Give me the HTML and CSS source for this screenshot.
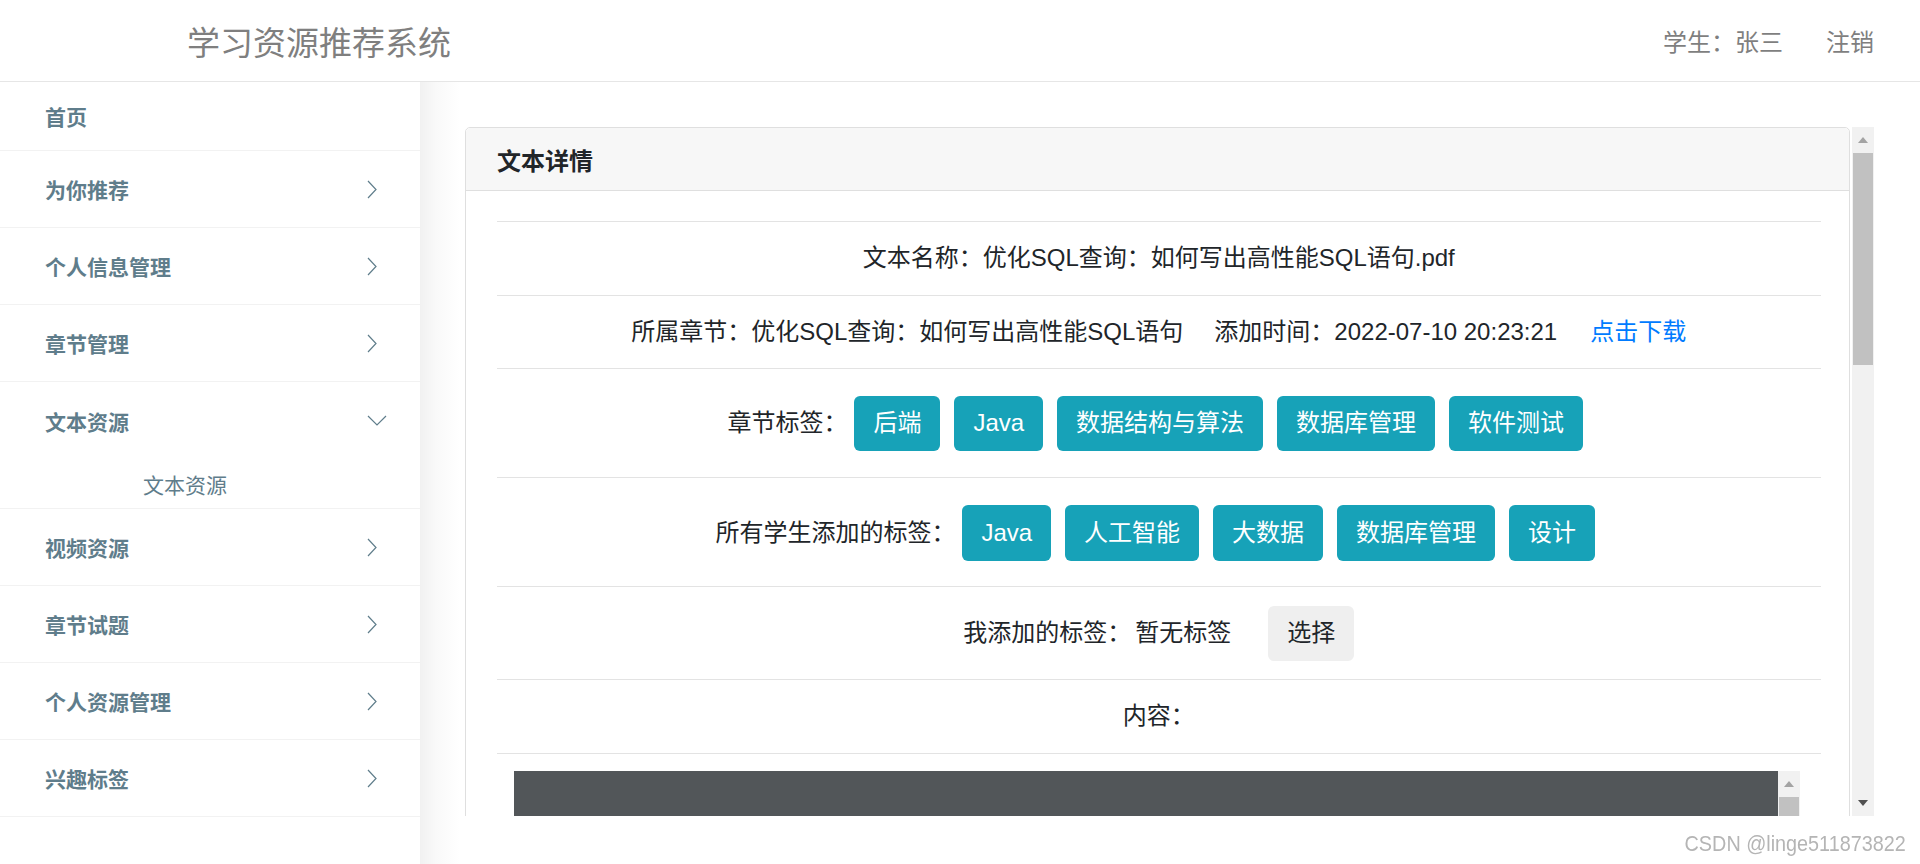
FILE: index.html
```html
<!DOCTYPE html>
<html lang="zh-CN">
<head>
<meta charset="utf-8">
<title>学习资源推荐系统</title>
<link rel="stylesheet" href="styles.css">
</head>
<body>
<header class="topbar">
  <div class="brand">学习资源推荐系统</div>
  <div class="user">
    <span class="user-name">学生：张三</span>
    <a class="logout">注销</a>
  </div>
</header>
<div class="layout">
  <nav class="sidebar">
    <div class="nav-item nav-home"><span>首页</span></div>
    <div class="nav-item"><span>为你推荐</span><span class="icon"><svg class="chev" viewBox="0 0 10 19"><polyline points="1,1 9,9.5 1,18"/></svg></span></div>
    <div class="nav-item"><span>个人信息管理</span><span class="icon"><svg class="chev" viewBox="0 0 10 19"><polyline points="1,1 9,9.5 1,18"/></svg></span></div>
    <div class="nav-item"><span>章节管理</span><span class="icon"><svg class="chev" viewBox="0 0 10 19"><polyline points="1,1 9,9.5 1,18"/></svg></span></div>
    <div class="nav-item nav-open"><span>文本资源</span><span class="icon"><svg class="chev-down" viewBox="0 0 20 11"><polyline points="1,1 10,10 19,1"/></svg></span></div>
    <div class="nav-sub">文本资源</div>
    <div class="nav-item"><span>视频资源</span><span class="icon"><svg class="chev" viewBox="0 0 10 19"><polyline points="1,1 9,9.5 1,18"/></svg></span></div>
    <div class="nav-item"><span>章节试题</span><span class="icon"><svg class="chev" viewBox="0 0 10 19"><polyline points="1,1 9,9.5 1,18"/></svg></span></div>
    <div class="nav-item"><span>个人资源管理</span><span class="icon"><svg class="chev" viewBox="0 0 10 19"><polyline points="1,1 9,9.5 1,18"/></svg></span></div>
    <div class="nav-item"><span>兴趣标签</span><span class="icon"><svg class="chev" viewBox="0 0 10 19"><polyline points="1,1 9,9.5 1,18"/></svg></span></div>
  </nav>
  <main class="main">
    <div class="scroller">
      <div class="viewport">
        <div class="card">
          <div class="card-header">文本详情</div>
          <div class="card-body">
            <div class="row row-text">文本名称：优化SQL查询：如何写出高性能SQL语句.pdf</div>
            <div class="row row-text">
              <span>所属章节：优化SQL查询：如何写出高性能SQL语句</span>
              <span class="meta-time">添加时间：2022-07-10 20:23:21</span>
              <a class="download">点击下载</a>
            </div>
            <div class="row row-tags">
              <span>章节标签：</span>
              <span class="tag">后端</span>
              <span class="tag">Java</span>
              <span class="tag">数据结构与算法</span>
              <span class="tag">数据库管理</span>
              <span class="tag">软件测试</span>
            </div>
            <div class="row row-tags row-tags2">
              <span>所有学生添加的标签：</span>
              <span class="tag">Java</span>
              <span class="tag">人工智能</span>
              <span class="tag">大数据</span>
              <span class="tag">数据库管理</span>
              <span class="tag">设计</span>
            </div>
            <div class="row row-mine">
              <span>我添加的标签：</span>
              <span class="empty">暂无标签</span>
              <span class="btn-select">选择</span>
            </div>
            <div class="row row-text row-last">内容：</div>
            <div class="pdf">
              <div class="pdf-page"></div>
              <div class="pdf-scroll">
                <div class="sb-btn"><svg class="arrow" viewBox="0 0 10 6"><polygon points="0,6 5,0 10,6" fill="#a3a3a3"/></svg></div>
                <div class="sb-thumb"></div>
              </div>
            </div>
          </div>
        </div>
      </div>
      <div class="vscroll">
        <div class="sb-btn"><svg class="arrow" viewBox="0 0 10 6"><polygon points="0,6 5,0 10,6" fill="#a3a3a3"/></svg></div>
        <div class="sb-thumb main-thumb"></div>
        <div class="sb-track"></div>
        <div class="sb-btn"><svg class="arrow" viewBox="0 0 10 6"><polygon points="0,0 10,0 5,6" fill="#505050"/></svg></div>
      </div>
    </div>
  </main>
</div>
<div class="watermark">CSDN @linge511873822</div>
</body>
</html>
```

FILE: styles.css
```css
* { box-sizing: border-box; }

html, body {
  margin: 0;
  padding: 0;
}

body {
  width: 1920px;
  height: 864px;
  overflow: hidden;
  display: flex;
  flex-direction: column;
  font-family: "Liberation Sans", "Noto Sans CJK SC", sans-serif;
  color: #212529;
  background: #fff;
}

/* ---------- top bar ---------- */
.topbar {
  flex: none;
  height: 82px;
  border-bottom: 1px solid #e6e6e6;
  display: flex;
  align-items: center;
  justify-content: space-between;
  padding: 0 46px 0 187px;
  color: #7f7f7f;
}

.brand {
  font-size: 33px;
}

.user {
  display: flex;
  gap: 43px;
  font-size: 24px;
}

.logout { cursor: pointer; }

/* ---------- layout ---------- */
.layout {
  flex: 1;
  min-height: 0;
  display: flex;
}

.sidebar {
  flex: none;
  width: 420px;
  background: #fff;
}

.nav-item {
  height: 77px;
  border-bottom: 1px solid #f2f2f2;
  display: flex;
  align-items: center;
  padding: 0 33px 0 45px;
  font-size: 21px;
  font-weight: 700;
  color: #5f7d8b;
}

.nav-home { height: 69px; }

.nav-open { border-bottom: none; }

.icon {
  margin-left: auto;
  width: 20px;
  height: 20px;
  display: flex;
  align-items: center;
}

.chev {
  width: 10px;
  height: 19px;
  fill: none;
  stroke: #5f7d8b;
  stroke-width: 1.2;
}

.chev-down {
  width: 20px;
  height: 11px;
  fill: none;
  stroke: #5f7d8b;
  stroke-width: 1.2;
}

.nav-sub {
  height: 50px;
  border-bottom: 1px solid #f2f2f2;
  display: flex;
  align-items: center;
  padding-left: 143px;
  font-size: 21px;
  color: #5f7d8b;
}

/* ---------- main ---------- */
.main {
  flex: 1;
  min-width: 0;
  display: flex;
  padding: 45px 46.5px 48.5px 45px;
  background: linear-gradient(to right, #f1f1f1 0, #f9f9f9 16px, #fff 40px);
}

.scroller {
  flex: 1;
  min-width: 0;
  display: flex;
}

.viewport {
  flex: 1;
  min-width: 0;
  overflow: hidden;
  padding-right: 2px;
}

.vscroll {
  flex: none;
  width: 22px;
  background: #f1f1f1;
  display: flex;
  flex-direction: column;
}

.sb-btn {
  flex: none;
  height: 26px;
  display: flex;
  align-items: center;
  justify-content: center;
}

.arrow {
  width: 10px;
  height: 6px;
}

.sb-thumb {
  background: #c1c1c1;
  margin: 0 1px;
}

.main-thumb { height: 212px; }

.sb-track { flex: 1; }

/* ---------- card ---------- */
.card {
  background: #fff;
  border: 1px solid #dfdfdf;
  border-radius: 5px;
}

.card-header {
  height: 63px;
  background: #f7f7f7;
  border-bottom: 1px solid #dfdfdf;
  border-radius: 5px 5px 0 0;
  display: flex;
  align-items: center;
  padding-left: 31px;
  font-size: 24px;
  font-weight: 700;
  color: #212529;
}

.card-body {
  padding: 30px 28px 0 31px;
}

.row {
  border-top: 1px solid #e3e3e3;
  display: flex;
  align-items: center;
  justify-content: center;
  font-size: 24px;
  line-height: 1.5;
  white-space: nowrap;
}

.row-text { padding: 18px 0 18.5px; }
.row-tags { padding: 26.5px 0 26px; }
.row-tags2 { padding: 27px 0 25.5px; }
.row-mine { padding: 18.5px 0 18px; }
.row-last { border-bottom: 1px solid #e3e3e3; }

.meta-time { margin-left: 31px; }

.download {
  margin-left: 33px;
  color: #007bff;
  cursor: pointer;
}

.tag {
  display: inline-block;
  margin: 0 7px;
  padding: 9.8px 19px;
  border-radius: 6px;
  background: #17a2b8;
  color: #fff;
  font-size: 24px;
  line-height: 1.5;
}

.empty { margin-left: 4px; }

.btn-select {
  margin-left: 37px;
  padding: 9.8px 19px;
  border-radius: 6px;
  background: #efefef;
  color: #212529;
}

/* ---------- embedded pdf ---------- */
.pdf {
  display: flex;
  height: 600px;
  margin: 17.5px 21px 0 17px;
}

.pdf-page {
  flex: 1;
  background: #525659;
}

.pdf-scroll {
  flex: none;
  width: 22px;
  background: #f1f1f1;
  display: flex;
  flex-direction: column;
}

.pdf-scroll .sb-thumb { height: 200px; }

/* ---------- watermark ---------- */
.watermark {
  position: fixed;
  right: 14px;
  bottom: 7px;
  font-family: "Liberation Sans", sans-serif;
  font-size: 22px;
  color: #b5b5b5;
  transform: scaleX(0.9);
  transform-origin: right center;
}
```
